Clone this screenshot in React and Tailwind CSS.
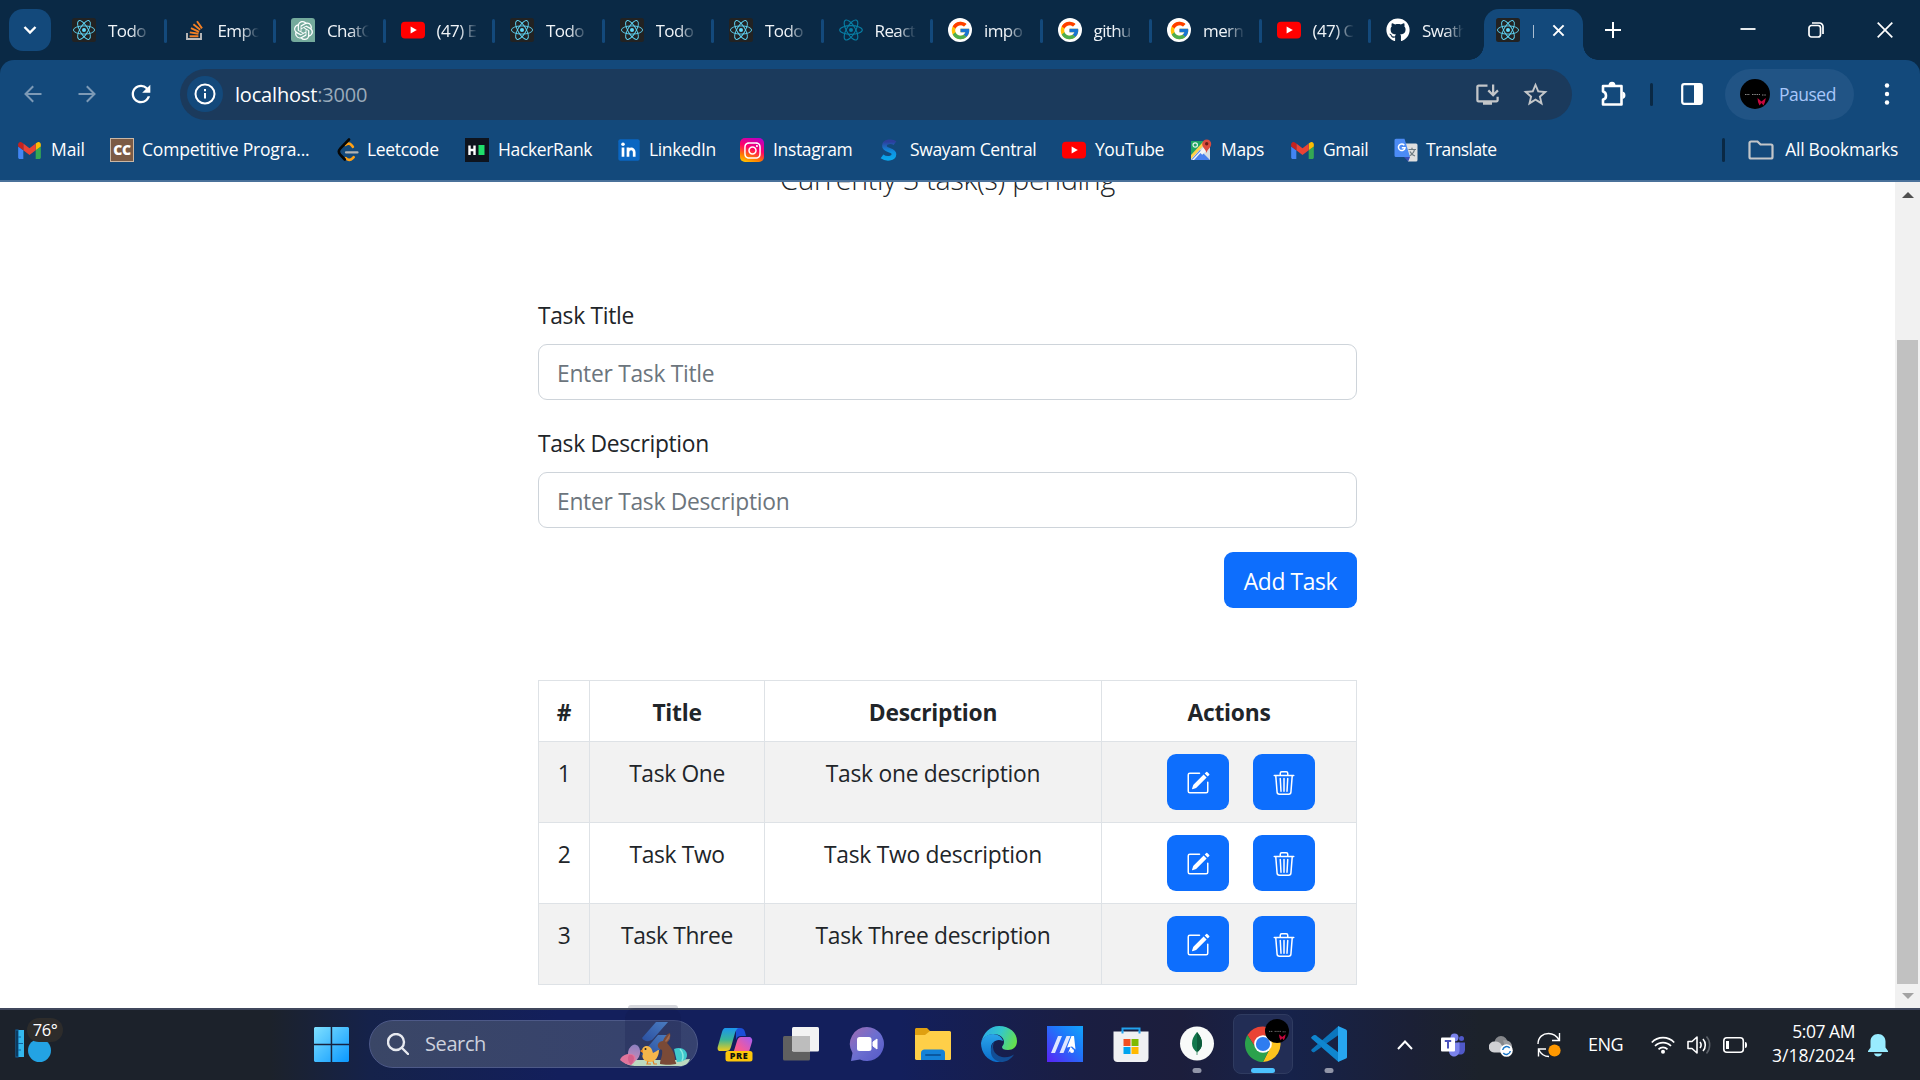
import React from "react";
import { FcGoogle } from "react-icons/fc";
import { SiOpenai } from "react-icons/si";
import { FaGithub, FaInstagram } from "react-icons/fa";
import { BsPencilSquare, BsTrash3 } from "react-icons/bs";
import { MdInstallDesktop, MdStarBorder, MdRefresh } from "react-icons/md";

/* ---------- site icons ---------- */

function ReactLogo({ dark = true, color = "#61dafb" }) {
  return (
    <svg viewBox="0 0 24 24" className="size-6 shrink-0">
      {dark && <rect width="24" height="24" rx="2.5" fill="#222" />}
      <g fill="none" stroke={color} strokeWidth={dark ? 0.9 : 1.1}>
        <ellipse cx="12" cy="12" rx={dark ? 10.6 : 11.3} ry={dark ? 4.1 : 4.4} />
        <ellipse cx="12" cy="12" rx={dark ? 10.6 : 11.3} ry={dark ? 4.1 : 4.4} transform="rotate(60 12 12)" />
        <ellipse cx="12" cy="12" rx={dark ? 10.6 : 11.3} ry={dark ? 4.1 : 4.4} transform="rotate(120 12 12)" />
      </g>
      <circle cx="12" cy="12" r="2" fill={color} />
    </svg>
  );
}

function StackOverflow() {
  return (
    <svg viewBox="0 0 24 24" className="size-6 shrink-0" fill="none" strokeWidth="1.9">
      <path d="M5 15v6h14v-6" stroke="#bcbbbb" />
      <path d="M7.6 18.3h8.800M7.8 14.4l8.700 1.400M9 10.2l8 3.700M11.400 6.300l6.800 5.500M15 3.200l5 7.200" stroke="#f48024" />
    </svg>
  );
}

function ChatGpt() {
  return (
    <span className="flex size-6 shrink-0 items-center justify-center rounded-[3px] rounded-br-none bg-[#74aa9c] text-white">
      <SiOpenai size={19} />
    </span>
  );
}

function YouTube() {
  return (
    <svg viewBox="0 0 24 24" className="size-6 shrink-0">
      <rect y="3.7" width="24" height="16.8" rx="4" fill="#f00" />
      <path d="M9.6 8.6v7l6.2-3.5z" fill="#fff" />
    </svg>
  );
}

function Google() {
  return (
    <span className="flex size-6 shrink-0 items-center justify-center rounded-full bg-white">
      <FcGoogle size={21} />
    </span>
  );
}

function Gmail() {
  return (
    <svg viewBox="52 42 88 66" className="h-[17px] w-[23px] shrink-0">
      <path fill="#4285f4" d="M58 108h14V74L52 59v43c0 3.32 2.69 6 6 6" />
      <path fill="#34a853" d="M120 108h14c3.32 0 6-2.69 6-6V59l-20 15" />
      <path fill="#fbbc04" d="M120 48v26l20-15v-8c0-7.42-8.47-11.65-14.4-7.2" />
      <path fill="#ea4335" d="M72 74V48l24 18 24-18v26L96 92" />
      <path fill="#c5221f" d="M52 51v8l20 15V48l-5.6-4.2c-5.94-4.45-14.4-.22-14.4 7.2" />
    </svg>
  );
}

function CodeChef() {
  return (
    <span className="flex size-6 shrink-0 items-center justify-center border border-[#c9b7a5] bg-[#7b5b45] font-['Open_Sans',sans-serif] text-[14px] font-extrabold leading-none tracking-tight text-white">
      CC
    </span>
  );
}

function Leetcode() {
  return (
    <svg viewBox="0 0 24 24" className="size-6 shrink-0" fill="none" strokeLinecap="round" strokeLinejoin="round" strokeWidth="2.6">
      <path d="M9.5 6.8c2-1.8 4.6-1.4 6 .4l1.4 1.6M9.8 20.2c2 2.2 4.8 2.2 6.4.5l1.5-1.6" stroke="#ffa116" />
      <path d="M13 1.5 4.2 10.6c-1.6 1.7-1.6 4.2 0 6l4.6 4.9" stroke="#070706" />
      <path d="M10 14.4h11.5" stroke="#b3b3b3" strokeWidth="2.2" />
    </svg>
  );
}

function HackerRank() {
  return (
    <svg viewBox="0 0 24 24" className="size-6 shrink-0">
      <path d="M0 0h24v24H0z" fill="#0e141e" />
      <path d="M4.5 7.5v9.5M9.5 7.5v9.5M4.5 12h5" stroke="#fff" strokeWidth="2.4" />
      <path d="M13.5 7h6v10h-6z" fill="#1fe06b" />
    </svg>
  );
}

function LinkedIn() {
  return (
    <svg viewBox="0 0 24 24" className="size-6 shrink-0">
      <rect x="1.3" y="1.3" width="21.4" height="21.4" rx="2" fill="#0a66c2" />
      <path d="M6 9.6v9.2M11 9.6v9.2M11 14c0-3.6 6.2-4.6 6.2.2v4.6" stroke="#fff" strokeWidth="2.7" fill="none" />
      <circle cx="6" cy="6.2" r="1.8" fill="#fff" />
    </svg>
  );
}

function Instagram() {
  return (
    <span className="flex size-6 shrink-0 items-center justify-center rounded-[5px] bg-[linear-gradient(200deg,#b900c8_5%,#ff0069_45%,#ff7a00_75%,#ffd600_100%)] text-white">
      <FaInstagram size={19} />
    </span>
  );
}

function Swayam() {
  return (
    <svg viewBox="0 0 24 24" className="size-6 shrink-0" fill="none">
      <defs>
        <linearGradient id="swayam" x1="0" y1="0" x2="0" y2="1">
          <stop offset="0" stopColor="#2c3f9c" />
          <stop offset=".6" stopColor="#0e8fe0" />
          <stop offset="1" stopColor="#0aa5ea" />
        </linearGradient>
      </defs>
      <path d="M17 5.2C14 3 6.600 3 6.400 7.800c-.2 5 9.800 3.600 9.600 8.400-.2 4.600-7.500 5.400-12 2.200" stroke="url(#swayam)" strokeWidth="4.600" />
    </svg>
  );
}

function Maps() {
  return (
    <svg viewBox="0 0 24 24" className="size-6 shrink-0">
      <path d="M2 3h19v19H2z" fill="#d7dce0" />
      <path d="M2 3h14L2 19z" fill="#1fa463" />
      <path d="M2 22 11 12l10 10z" fill="#4a80ee" />
      <path d="m3 22 15-16 3 3L8 22z" fill="#f5f5f5" />
      <path d="m2 17 12-13 2 2L2 21z" fill="#ffd04b" />
      <path d="M5 22 11.500 15 18 22z" fill="#4a80ee" />
      <circle cx="6.200" cy="7" r="2.200" fill="none" stroke="#e5f4ec" strokeWidth="1.200" />
      <path d="M17.500 15c-.5-4-4.300-5-4.300-9a4.500 4.500 0 0 1 9 0c0 4-4 5-4.700 9z" fill="#dc4b3e" />
      <circle cx="17.700" cy="5.800" r="1.700" fill="#6c1d17" />
    </svg>
  );
}

function Translate() {
  return (
    <svg viewBox="0 0 24 24" className="size-6 shrink-0">
      <path d="M11 5.500h11a1.500 1.500 0 0 1 1.500 1.500v15a1.500 1.500 0 0 1-1.500 1.500H14z" fill="#dfdfdf" />
      <path d="m10 19 6 0-1.800 4.500z" fill="#3a4db5" />
      <path d="M2 .8h8.500L16 19H2a1.500 1.500 0 0 1-1.500-1.500v-15A1.500 1.500 0 0 1 2 .8z" fill="#4c8bf5" />
      <path d="M10.300 7.200A3.300 3.300 0 1 0 11 9.800H7.800" fill="none" stroke="#fff" strokeWidth="1.500" />
      <path d="M14.500 11.500h7.500M18 9.800v1.700M20.500 11.500c-.6 3-2.500 5-4.800 6.300M16 13.500c.8 1.800 2.600 3.600 5 4.500" fill="none" stroke="#6d7a80" strokeWidth="1.200" />
    </svg>
  );
}

/* ---------- browser chrome ---------- */

const tabs = [
  { icon: <ReactLogo />, text: "Todo" },
  { icon: <StackOverflow />, text: "Empo" },
  { icon: <ChatGpt />, text: "ChatG" },
  { icon: <YouTube />, text: "(47) E" },
  { icon: <ReactLogo />, text: "Todo" },
  { icon: <ReactLogo />, text: "Todo" },
  { icon: <ReactLogo />, text: "Todo" },
  { icon: <ReactLogo dark={false} color="#087ea4" />, text: "React" },
  { icon: <Google />, text: "impo" },
  { icon: <Google />, text: "githu" },
  { icon: <Google />, text: "mern" },
  { icon: <YouTube />, text: "(47) C" },
  { icon: <FaGithub size={24} className="shrink-0 text-white" />, text: "Swath" },
];

function TabStrip() {
  return (
    <div className="flex h-[60px] bg-[#0a2945]">
      <div className="ml-[9px] mt-[9px] flex h-[42px] w-[42px] items-center justify-center rounded-[14px] bg-[#13497b]">
        <svg viewBox="0 0 14 10" className="h-[10px] w-[14px]" fill="none" stroke="#fff" strokeWidth="2.4">
          <path d="m1.500 2 5.500 5.500L12.500 2" />
        </svg>
      </div>
      <div className="ml-[6px] flex">
        {tabs.map((tab, i) => (
          <div key={i} className="flex w-[109.5px] pl-[15px] pt-[18px]">
            {tab.icon}
            <span className="ml-3 mt-[1px] w-[42px] overflow-hidden whitespace-nowrap text-[17px] leading-6 tracking-[-0.6px] text-[#f0f4f8] [mask-image:linear-gradient(to_right,#000_55%,transparent_100%)]">
              {tab.text}
            </span>
            {i < 12 && <span className="ml-[14px] mt-[1px] h-6 w-[3px] shrink-0 rounded-full bg-[#13497b]" />}
          </div>
        ))}
      </div>
      <div className="-ml-[12px] flex items-end">
        <span className="size-[15px] bg-[radial-gradient(circle_at_0_0,transparent_14.5px,#13497b_15px)]" />
        <div className="flex h-[51px] w-[99px] rounded-t-[15px] bg-[#13497b] pl-[12px] pt-[9px]">
          <ReactLogo />
          <span className="ml-[13px] mt-[7px] h-[13px] w-[1.5px] bg-[#a9bdd1]" />
          <svg viewBox="0 0 14 14" className="ml-[18px] mt-[6px] size-[13px]" stroke="#fff" strokeWidth="2.2">
            <path d="m1.500 1.500 11 11M12.500 1.500l-11 11" />
          </svg>
        </div>
        <span className="size-[15px] bg-[radial-gradient(circle_at_100%_0,transparent_14.5px,#13497b_15px)]" />
      </div>
      <svg viewBox="0 0 16 16" className="ml-[7px] mt-[22px] size-4" stroke="#fff" strokeWidth="2">
        <path d="M8 0v16M0 8h16" />
      </svg>
      <div className="ml-auto mr-[27px] mt-[22px] flex">
        <svg viewBox="0 0 16 16" className="mr-[52px] size-4" stroke="#fff" strokeWidth="1.800">
          <path d="M.5 7h15" />
        </svg>
        <svg viewBox="0 0 16 16" className="mr-[53px] size-4" fill="none" stroke="#fff" strokeWidth="1.700">
          <rect x="1" y="3.500" width="11.500" height="11.500" rx="2.500" />
          <path d="M4 1h7.500A3.500 3.500 0 0 1 15 4.500V12" />
        </svg>
        <svg viewBox="0 0 16 16" className="size-4" stroke="#fff" strokeWidth="1.700">
          <path d="m.7.7 14.600 14.600M15.300.7.7 15.300" />
        </svg>
      </div>
    </div>
  );
}

function Arrow({ flip }) {
  return (
    <svg viewBox="0 0 18 18" className={flip ? "size-[18px] rotate-180" : "size-[18px]"} fill="none" stroke="#7d9ab6" strokeWidth="2">
      <path d="M17.500 9H1.800M9.200 1.300 1.500 9l7.700 7.700" />
    </svg>
  );
}

function ProfilePicture({ className }) {
  return (
    <svg viewBox="0 0 30 30" className={className}>
      <circle cx="15" cy="15" r="15" fill="#000" />
      <path d="M5 15.500h5M12 15.500h8M22 16h4" stroke="#888" strokeWidth="1" strokeDasharray="1.500 .8" />
      <path d="m21.500 22.500-4-3.500.5 4 1.500 3.500 2-2.500 2 2.500L25 23l.8-4z" fill="#c4083f" />
    </svg>
  );
}

function Toolbar() {
  return (
    <div className="bg-[#0a2945]">
      <div className="flex h-[68px] items-center rounded-t-[14px] bg-[#13497b] pl-[24px] pr-[28px]">
        <Arrow />
        <span className="ml-[36px] flex"><Arrow flip /></span>
        <MdRefresh size={28} className="ml-[31px] text-white" />
        <div className="ml-[25px] flex h-[51px] w-[1392px] items-center rounded-full bg-[#1b3a5c] pl-[7px] pr-[22px]">
          <span className="flex size-9 items-center justify-center rounded-full bg-[#13497b]">
            <svg viewBox="0 0 22 22" className="size-[22px]" fill="none" stroke="#fff" strokeWidth="2">
              <circle cx="11" cy="11" r="9.500" />
              <path d="M11 10v5.500M11 6v2.200" />
            </svg>
          </span>
          <span className="ml-[12px] translate-y-px text-[20px] leading-none tracking-[-0.18px] text-white">
            localhost<span className="text-[#9aaaba]">:3000</span>
          </span>
          <MdInstallDesktop size={27} className="ml-auto text-[#c3c6c9]" />
          <MdStarBorder size={29} className="ml-[20px] text-[#c3c6c9]" />
        </div>
        <svg viewBox="0 0 26 26" className="ml-[28px] size-[26px]">
          <path d="M3 5h18.500v18.500H3v-5c4-.6 4-7 0-8z" fill="none" stroke="#fff" strokeWidth="2.600" strokeLinejoin="round" />
          <path d="M8.500 4.500a3.500 3.800 0 0 1 7 0zM22.500 10.500a3.500 3.800 0 0 1 0 7.500z" fill="#fff" />
        </svg>
        <span className="ml-[24px] h-[23px] w-[3px] rounded-full bg-[#0a2945]" />
        <svg viewBox="0 0 22 22" className="ml-[28px] size-[22px]">
          <rect x="1.200" y="1.200" width="19.600" height="19.600" rx="2" fill="none" stroke="#fff" strokeWidth="2.200" />
          <path d="M13 1h8v20h-8z" fill="#fff" />
        </svg>
        <div className="ml-[22px] flex h-[51px] w-[129px] items-center rounded-full bg-[#215485] pl-[15px]">
          <ProfilePicture className="size-[30px]" />
          <span className="ml-[9px] text-[17.5px] tracking-[-0.5px] text-[#a8c7fa]">Paused</span>
        </div>
        <svg viewBox="0 0 6 22" className="ml-auto h-[22px] w-[6px] translate-x-[-2px]" fill="#fff">
          <circle cx="3" cy="2.500" r="2.200" />
          <circle cx="3" cy="11" r="2.200" />
          <circle cx="3" cy="19.500" r="2.200" />
        </svg>
      </div>
    </div>
  );
}

const bookmarks = [
  { icon: <Gmail />, text: "Mail", w: "w-[92px]", gap: "ml-[10px] tracking-[-0.1px]" },
  { icon: <CodeChef />, text: "Competitive Progra...", w: "w-[226px]", gap: "ml-[8px] tracking-[-0.17px]" },
  { icon: <Leetcode />, text: "Leetcode", w: "w-[129px]", gap: "ml-[7px]" },
  { icon: <HackerRank />, text: "HackerRank", w: "w-[152px]", gap: "ml-[9px]" },
  { icon: <LinkedIn />, text: "LinkedIn", w: "w-[123px]", gap: "ml-[8px]" },
  { icon: <Instagram />, text: "Instagram", w: "w-[138px]", gap: "ml-[9px]" },
  { icon: <Swayam />, text: "Swayam Central", w: "w-[184px]", gap: "ml-[8px]" },
  { icon: <YouTube />, text: "YouTube", w: "w-[127px]", gap: "ml-[9px] tracking-[-0.45px]" },
  { icon: <Maps />, text: "Maps", w: "w-[102px]", gap: "ml-[8px]" },
  { icon: <Gmail />, text: "Gmail", w: "w-[103px]", gap: "ml-[9px] tracking-[-0.45px]" },
  { icon: <Translate />, text: "Translate", w: "w-[110px]", gap: "ml-[8px] tracking-[-0.6px]" },
];

function BookmarksBar() {
  return (
    <div className="flex h-[54px] items-center border-b-2 border-[#4a719a] bg-[#13497b] pb-[8px] pl-[18px] pr-[22px] text-[17.5px] tracking-[-0.35px] text-white">
      {bookmarks.map((b, i) => (
        <div key={i} className={`flex items-center whitespace-nowrap ${b.w}`}>
          {b.icon}
          <span className={`-translate-y-px ${b.gap}`}>{b.text}</span>
        </div>
      ))}
      <span className="ml-auto h-6 w-[3px] rounded-full bg-[#0a2945]" />
      <svg viewBox="0 0 26 20" className="ml-[23px] h-5 w-[26px]" fill="none" stroke="#c3c6c9" strokeWidth="2.200">
        <path d="M1.500 3A1.500 1.500 0 0 1 3 1.500h6.500l3 3H23A1.500 1.500 0 0 1 24.500 6v11a1.500 1.500 0 0 1-1.500 1.500H3A1.500 1.500 0 0 1 1.500 17z" />
      </svg>
      <span className="ml-[11px] -translate-y-px whitespace-nowrap tracking-[-0.3px]">All Bookmarks</span>
    </div>
  );
}

/* ---------- todo page ---------- */

const tasks = [
  { title: "Task One", description: "Task one description" },
  { title: "Task Two", description: "Task Two description" },
  { title: "Task Three", description: "Task Three description" },
];

function Field({ label, placeholder }) {
  return (
    <div className="mb-6">
      <label className="mb-3 block h-9 whitespace-nowrap pt-[2px] leading-9 tracking-[-0.3px]">{label}</label>
      <input
        placeholder={placeholder}
        className="block h-14 w-full rounded-[9px] border border-[#ced4da] px-[18px] pt-[2px] tracking-[-0.28px] placeholder:text-[#6c757d] placeholder:opacity-100"
      />
    </div>
  );
}

function ActionButton({ children }) {
  return (
    <button className="flex h-14 w-[62px] items-center justify-center rounded-[9px] bg-[#0d6efd] pt-[2px] text-white">{children}</button>
  );
}

function TodoPage() {
  return (
    <div className="flex h-[826px] overflow-hidden bg-white">
      <main className="min-w-0 flex-1 text-[22.8px] tracking-[-0.35px] text-[#212529]">
        <p className="-mt-[25px] h-[44px] text-center text-[28.5px] font-light leading-[44px] tracking-[-0.25px]">Currently 3 task(s) pending</p>
        <div className="mx-auto w-[819px] pt-[95px]">
          <Field label="Task Title" placeholder="Enter Task Title" />
          <Field label="Task Description" placeholder="Enter Task Description" />
          <div className="flex justify-end">
            <button className="h-14 w-[133px] whitespace-nowrap rounded-[9px] bg-[#0d6efd] pt-[4px] text-white">Add Task</button>
          </div>
          <table className="mt-[72px] w-[819px] table-fixed border-collapse text-center">
            <colgroup>
              <col className="w-[51px]" />
              <col className="w-[175px]" />
              <col className="w-[337px]" />
              <col className="w-[255px]" />
            </colgroup>
            <thead>
              <tr className="h-[61px]">
                {["#", "Title", "Description", "Actions"].map((h) => (
                  <th key={h} className="border border-[#dee2e6] pt-[5px] font-bold tracking-[-0.25px]">{h}</th>
                ))}
              </tr>
            </thead>
            <tbody>
              {tasks.map((t, i) => (
                <tr key={t.title} className="h-[81px] align-top odd:bg-[#f2f2f2]">
                  <td className="border border-[#dee2e6] pt-[14px] leading-9">{i + 1}</td>
                  <td className="border border-[#dee2e6] pt-[14px] leading-9">{t.title}</td>
                  <td className="border border-[#dee2e6] pt-[14px] leading-9 tracking-[-0.25px]">{t.description}</td>
                  <td className="border border-[#dee2e6]">
                    <div className="mt-3 flex gap-6 pl-[65px]">
                      <ActionButton><BsPencilSquare size={24} /></ActionButton>
                      <ActionButton><BsTrash3 size={24} /></ActionButton>
                    </div>
                  </td>
                </tr>
              ))}
            </tbody>
          </table>
        </div>
      </main>
      <div className="flex w-[25px] flex-col items-center bg-[#f1f1f1]">
        <svg viewBox="0 0 12 6" className="mt-[10px] h-[6px] w-[12px]"><path d="m6 0 6 6H0z" fill="#505050" /></svg>
        <div className="mt-[142px] h-[644px] w-[21px] bg-[#c1c1c1]" />
        <svg viewBox="0 0 12 6" className="mt-[9px] h-[6px] w-[12px]"><path d="m6 6 6-6H0z" fill="#a3a3a3" /></svg>
      </div>
    </div>
  );
}

/* ---------- taskbar ---------- */

function Weather() {
  return (
    <div className="relative ml-[15px] mt-[18px] h-8 w-[48px]">
      <svg viewBox="0 0 38 34" className="h-[34px] w-[38px]">
        <path d="M1 2h8v27H1z" fill="#33b8ee" />
        <path d="M1 2h2v27H1zM3 9h3M3 15.500h5M3 22h3" stroke="#13639f" strokeWidth="1.200" />
        <circle cx="24.500" cy="22.500" r="11.500" fill="#23a3e4" />
      </svg>
      <span className="absolute left-[12px] -top-[10px] flex h-6 w-9 items-center justify-center rounded-full bg-[#2d2c2b] text-[16.5px] tracking-tight text-white">76°</span>
    </div>
  );
}

function WindowsLogo() {
  return (
    <svg viewBox="0 0 35 35" className="size-[35px]">
      <defs>
        <linearGradient id="win" x1="0" y1="0" x2="1" y2="1">
          <stop offset="0" stopColor="#7fe0ff" />
          <stop offset="1" stopColor="#0a98ff" />
        </linearGradient>
      </defs>
      <path d="M1 0h15.700v16.700H0V1zM18.200 0H34l1 1v15.700H18.200zM0 18.200h16.700V35H1l-1-1zM18.200 18.200H35V34l-1 1H18.200z" fill="url(#win)" />
    </svg>
  );
}

function EasterArt() {
  return (
    <svg viewBox="0 0 74 62" className="h-[62px] w-[74px]">
      <defs>
        <linearGradient id="egg" x1="0" y1="0" x2="0" y2="1">
          <stop offset="0" stopColor="#8b7fc0" />
          <stop offset="1" stopColor="#c98bb8" />
        </linearGradient>
        <linearGradient id="ribbon" x1="0" y1="1" x2="1" y2="0">
          <stop offset="0" stopColor="#2a4fa0" />
          <stop offset="1" stopColor="#4a7cc0" />
        </linearGradient>
      </defs>
      <rect x="6" y="0" width="56" height="62" rx="10" fill="#11184a" opacity=".22" />
      <path d="M37 14h12L34 31c-3 3-9 3-11-1z" fill="url(#ribbon)" />
      <path d="M39 27h9c3 0 4 3 2 5L36 47H22z" fill="url(#ribbon)" />
      <path d="M4 53c6-2 10-2 14-1h38l15-1c-2 5-5 7-10 7H18c-6 0-11-1-14-5z" fill="#bcd9bf" />
      <ellipse cx="15" cy="45" rx="6" ry="8.500" fill="url(#egg)" transform="rotate(12 15 45)" />
      <path d="M1 52c2-6 10-7 14-5 3 3 1 8-3 10-3 0-8-2-11-5z" fill="#e0759c" />
      <path d="M10 47c5-1 7 4 2 10-3-3-4-7-2-10z" fill="#c95080" opacity=".6" />
      <path d="M55 41c7-3 13 1 13 6 0 4-3 7-10 7z" fill="#3fc9cd" />
      <path d="M61 41c3 3 4 8 2 12" stroke="#8beae0" strokeWidth="1.500" fill="none" />
      <path d="M23 43c0-6 8-7 10-1l1 3c3-1 4-3 6-3 0 7-4 12-9 12-6 0-9-5-7-8z" fill="#f4b64b" />
      <path d="m21 43 3-2v4z" fill="#f08a1d" />
      <circle cx="26.500" cy="41" r="1" fill="#2b2118" />
      <path d="m29 53-1 3h4M34 53l1 3h3" stroke="#e07e22" strokeWidth="1.200" fill="none" />
      <path d="M41 56c0-5 3-8 2-14-3-1-5-3-4-6 1-2 3-3 5-3 1-4 4-7 7-8 1 3 0 7-3 10 5 5 8 11 8 17 0 2 2 3 1 4-4 1-12 1-16 0z" fill="#7a4a37" />
      <path d="M46 33c2-3 3-5 5-7 0 3-1 6-4 8z" fill="#a2694d" />
    </svg>
  );
}

function Copilot() {
  return (
    <svg viewBox="0 0 36 36" className="size-9">
      <defs>
        <linearGradient id="cpa" x1="0" y1="0" x2="0" y2="1">
          <stop offset="0" stopColor="#1b95ee" />
          <stop offset=".5" stopColor="#38b59a" />
          <stop offset="1" stopColor="#f3cc19" />
        </linearGradient>
        <linearGradient id="cpb" x1="0" y1="1" x2="1" y2="0">
          <stop offset="0" stopColor="#ff7a50" />
          <stop offset=".5" stopColor="#f45a9a" />
          <stop offset="1" stopColor="#a45cf5" />
        </linearGradient>
      </defs>
      <path d="M19 2h4c3 0 4 1 5 4l1 4h-5c-3 0-4 1-5 4z" fill="#1c4fd8" />
      <path d="M8 2h14c-2 0-3 2-4 5l-4 14c-1 3-2 4-5 4H3c-2 0-3-2-2-5L5 6c1-3 2-4 3-4z" fill="url(#cpa)" />
      <path d="M24 11h8c2 0 4 2 3 5l-4 13c-1 3-2 4-5 4H11c3 0 4-2 5-5l4-13c1-3 2-4 4-4z" fill="url(#cpb)" />
      <rect x="8.500" y="25" width="27" height="10.500" rx="2.500" fill="#fdc60b" />
      <text x="22" y="33.400" textAnchor="middle" fontFamily="Open Sans, sans-serif" fontWeight="800" fontSize="9" letterSpacing=".6" fill="#111">PRE</text>
    </svg>
  );
}

function TaskView() {
  return (
    <svg viewBox="0 0 36 36" className="size-9">
      <rect y="10" width="27" height="24.500" rx="1.500" fill="#606060" />
      <rect x="9" y="1" width="27" height="24.500" rx="1.500" fill="#f3f3f3" />
      <path d="M9 10h18v15.500H10.500L9 24z" fill="#bdbdbd" />
    </svg>
  );
}

function Chat() {
  return (
    <svg viewBox="0 0 36 36" className="size-9">
      <defs>
        <linearGradient id="chat" x1="0" y1="0" x2="1" y2="1">
          <stop offset="0" stopColor="#a06ab0" />
          <stop offset=".5" stopColor="#6c6fd0" />
          <stop offset="1" stopColor="#5458c8" />
        </linearGradient>
      </defs>
      <path d="M18 1a17 17 0 1 1-7 32.500L2 35l1.500-8A17 17 0 0 1 18 1z" fill="url(#chat)" />
      <rect x="8" y="11" width="14.500" height="14" rx="2.500" fill="#fff" />
      <path d="m24 16 4-3v10l-4-3z" fill="#fff" stroke="#fff" strokeLinejoin="round" />
    </svg>
  );
}

function Explorer() {
  return (
    <svg viewBox="0 0 36 36" className="size-9">
      <path d="M0 3.500C0 2.500.8 2 1.500 2H12l4 4-5 5H0z" fill="#e0a010" />
      <path d="M0 9h10l5-4h19.500C35.500 5 36 6 36 6.500v26c0 1-.8 1.500-1.500 1.500h-33C.5 34 0 33 0 32.500z" fill="#ffcf48" />
      <path d="M6 34V27c0-2 1.500-3.500 3.500-3.500h17c2 0 3.500 1.500 3.500 3.500v7z" fill="#1482d8" />
      <path d="M11 29h14" stroke="#0a58a0" strokeWidth="2" strokeLinecap="round" />
    </svg>
  );
}

function Edge() {
  return (
    <svg viewBox="0 0 36 36" className="size-9">
      <defs>
        <linearGradient id="edgeTop" x1="0" y1=".3" x2="1" y2=".6">
          <stop offset="0" stopColor="#2aa9e8" />
          <stop offset=".5" stopColor="#35c8c8" />
          <stop offset="1" stopColor="#66e04a" />
        </linearGradient>
        <linearGradient id="edgeLow" x1="0" y1="0" x2="0" y2="1">
          <stop offset="0" stopColor="#2aa5ea" />
          <stop offset="1" stopColor="#0a6ccb" />
        </linearGradient>
      </defs>
      <path d="M0 17C2 7 9 0 18 0c11 0 18 7 18 15 0 6-4 9-9 9-4 0-6-1-6-3 0-1 2-2 2-5 0-4-4-8-10-8C7 8 1 12 0 17z" fill="url(#edgeTop)" />
      <path d="M0 17c1-5 6-9 12-9 5 0 9 3 10 7-7-3-13 2-12 9 1 6 5 11 11 12-1 .3-2 .3-3 .3C8 36 0 28 0 17z" fill="url(#edgeLow)" />
      <path d="M14 15c-4 5-2 14 7 16 5 1 9-.5 12-2.500-3 5-8 7.500-13 7.500C13 35 9 30 10 23c.5-4 2-7 4-8z" fill="#124e96" />
    </svg>
  );
}

function Asus() {
  return (
    <svg viewBox="0 0 36 36" className="size-9">
      <defs>
        <linearGradient id="asus" x1="0" y1="1" x2="1" y2="0">
          <stop offset="0" stopColor="#5a22f5" />
          <stop offset=".6" stopColor="#1e78fa" />
          <stop offset="1" stopColor="#12a4fb" />
        </linearGradient>
      </defs>
      <path d="M0 0h36v36H0z" fill="url(#asus)" />
      <path d="m4 27 7-17h4L8 27zM12.500 27l7-17h4l-7 17z" fill="#dfe6ff" />
      <path d="M20 21.500 24.500 10H27l1.500 13.500-3.500-3zM21 27l2.500-6 2 1.500z" fill="#fff" />
      <circle cx="25" cy="25" r="2" fill="#fff" />
    </svg>
  );
}

function Store() {
  return (
    <svg viewBox="0 0 36 36" className="size-9">
      <path d="M9.500 8V2.500h17V8" fill="none" stroke="#22a2ee" strokeWidth="2" />
      <path d="M.5 5.500h35V32c0 2.500-1.500 4-4 4h-27c-2.500 0-4-1.500-4-4z" fill="#f0f1f3" />
      <path d="M9.500 5v2.500M26.500 5v2.500" stroke="#22a2ee" strokeWidth="2" />
      <path d="M10.500 13h7v7h-7z" fill="#f25022" />
      <path d="M18.500 13h7v7h-7z" fill="#7fba00" />
      <path d="M10.500 21h7v7h-7z" fill="#00a4ef" />
      <path d="M18.500 21h7v7h-7z" fill="#ffb900" />
    </svg>
  );
}

function Mongo() {
  return (
    <svg viewBox="0 0 36 36" className="size-9">
      <circle cx="18" cy="17.500" r="17" fill="#f8faf9" />
      <path d="M18 6c3.500 4 5 7.500 5 11.500s-2 6.500-5 9c-3-2.500-5-5-5-9S14.500 10 18 6z" fill="#11774c" />
      <path d="M18 6c3.500 4 5 7.500 5 11.500s-2 6.500-5 9z" fill="#0b5a3a" />
      <path d="M18 25v4" stroke="#5a9c7c" strokeWidth="1" />
    </svg>
  );
}

function ChromeLogo() {
  return (
    <svg viewBox="2 2 44 44" className="size-9">
      <path d="M4.950 13A22 22 0 0 1 43.050 14H24L15.340 29Z" fill="#e94335" />
      <path d="M43.050 14A22 22 0 0 1 24 46L32.700 29 24 14Z" fill="#fcc31e" />
      <path d="M24 46A22 22 0 0 1 4.950 13L15.340 29 24 34l8.700-5z" fill="#2ba24c" />
      <circle cx="24" cy="24" r="10.800" fill="#fff" />
      <circle cx="24" cy="24" r="8.700" fill="#2e7cf0" />
    </svg>
  );
}

function VsCode() {
  return (
    <svg viewBox="0 0 36 36" className="size-9">
      <path d="M2.800 9.500 27.500 27V36L.8 12.800c-.8-.8-.8-1.400 0-2z" fill="#0f86cf" />
      <path d="M2.800 26.500 27.500 9V0L.8 23.200c-.8.800-.8 1.400 0 2z" fill="#0b76bd" />
      <path d="M1 10.700 3 9.200c.6-.4 1.200-.4 1.800 0L27.500 26.500V35L1 12.500c-.5-.6-.5-1.300 0-1.800z" fill="#0f86cf" />
      <path d="M27 0l8 3.600c.6.300 1 .9 1 1.500v25.800c0 .7-.4 1.300-1 1.500L27 36z" fill="#27a6f0" />
    </svg>
  );
}

function TaskbarApp({ children, indicator }) {
  return (
    <div className="relative flex h-full w-[66px] justify-center pt-[16px]">
      {children}
      {indicator && <span className="absolute bottom-[7px] left-1/2 h-[5px] w-[9px] -translate-x-1/2 rounded-full bg-[#9195a8]" />}
    </div>
  );
}

function Tray() {
  return (
    <div className="ml-auto flex h-full w-[523px] items-center text-white">
      <svg viewBox="0 0 16 10" className="h-[10px] w-4" fill="none" stroke="#fff" strokeWidth="2">
        <path d="m1 9 7-7.500L15 9" />
      </svg>
      <svg viewBox="0 0 24 24" className="ml-7 size-6">
        <circle cx="13.500" cy="4.500" r="4" fill="#7b83eb" />
        <circle cx="20.500" cy="5.500" r="2.500" fill="#5059c9" />
        <path d="M17 9.500h7v7c0 3-2 5-4.500 5H17z" fill="#5059c9" />
        <path d="M9 9.500h9.500V17c0 4-2.500 6.500-5.500 6.500S8 21 8 18z" fill="#7b83eb" />
        <rect y="4.500" width="14" height="14" rx="1" fill="#fff" />
        <path d="M3.800 8h6.400M7 8v7.500" stroke="#4b53bc" strokeWidth="2" />
      </svg>
      <svg viewBox="0 0 24 24" className="ml-6 size-6">
        <circle cx="12" cy="9.500" r="6.500" fill="#85878b" />
        <path d="M14 7.500c5-1 9 2 9 6s-2 6-5 6z" fill="#9c9da1" />
        <path d="M5 19.500a5.500 5.500 0 0 1 .5-11c3-.5 6 1 7 3.500l5 7.500z" fill="#d0d1d4" />
        <circle cx="17.500" cy="17.500" r="6.300" fill="#fff" />
        <path d="M13.700 17a4 4 0 0 1 7-2M21.300 18a4 4 0 0 1-7 2" fill="none" stroke="#1976c8" strokeWidth="1.500" />
      </svg>
      <svg viewBox="0 0 24 26" className="ml-6 h-[26px] w-6" fill="none" stroke="#fff" strokeWidth="1.400">
        <path d="M1 12C1 5 6 1.500 11.500 1.500c4.500 0 8 2 10.500 6.500M22.500 1v7.500H15M1.500 24.500V17H9M2 18c2 4.500 6 6.500 10 6.500" />
        <circle cx="17.500" cy="18.500" r="6.100" fill="#ff9800" stroke="none" />
      </svg>
      <span className="ml-[27px] w-[35px] -translate-y-px text-[18px] tracking-[-0.5px]">ENG</span>
      <svg viewBox="0 0 24 18" className="ml-7 h-[18px] w-6" fill="none" stroke="#fff" strokeWidth="1.700">
        <path d="M.8 6.500a15.500 15.500 0 0 1 22.400 0M4 10a11 11 0 0 1 16 0M7.500 13.300a6.300 6.300 0 0 1 9 0" />
        <circle cx="12" cy="15.800" r="2" fill="#fff" stroke="none" />
      </svg>
      <svg viewBox="0 0 24 20" className="ml-3 h-5 w-6" fill="none" stroke="#fff" strokeWidth="1.600" strokeLinejoin="round">
        <path d="M1 6.500h4l5-4.500v16l-5-4.500H1zM13 7a5 5 0 0 1 0 6M16 4a9 9 0 0 1 0 12" />
        <path d="M19.500 1.500a13 13 0 0 1 0 17" stroke="#5b6067" />
      </svg>
      <svg viewBox="0 0 24 16" className="ml-3 h-4 w-6" fill="none" stroke="#fff" strokeWidth="1.600">
        <rect x=".8" y=".8" width="19.500" height="14.400" rx="3" />
        <path d="M4.500 4v8" strokeWidth="3" />
        <path d="M22 5v6c1.500 0 2-1 2-3s-.5-3-2-3z" fill="#fff" stroke="none" />
      </svg>
      <div className="ml-auto flex -translate-y-[2px] flex-col items-end text-[17.5px] leading-6">
        <span className="tracking-[-0.45px]">5:07 AM</span>
        <span className="tracking-[0px]">3/18/2024</span>
      </div>
      <svg viewBox="0 0 20 24" className="ml-[13px] mr-[32px] h-6 w-5" fill="#99ecff">
        <path d="M10 1c4.500 0 7.500 3.200 7.500 7.500v6L20 18v1H0v-1l2.500-3.500v-6C2.500 4.200 5.500 1 10 1zM6 20.500h8c-.5 2-2 3-4 3s-3.500-1-4-3z" />
      </svg>
    </div>
  );
}

function Taskbar() {
  return (
    <div className="relative flex h-[72px] border-t-2 border-[#40475c] bg-[linear-gradient(to_right,#1c222b_0px,#1c222b_270px,#15224a_370px,#131f5c_560px,#131f5c_900px,#1a1e42_1080px,#1c1e3c_1180px,#16224a_1290px,#1b2036_1410px,#1c222b_1480px)]">
      <span className="absolute -top-[5px] left-[628px] h-[3px] w-[50px] rounded-t-[6px] bg-[#d6d7dc]" />
      <div className="flex w-[314px]"><Weather /></div>
      <div className="mt-[17px]"><WindowsLogo /></div>
      <div className="ml-5 mt-[10px] flex h-12 w-[329px] items-center rounded-full border border-[#4d5988] bg-[linear-gradient(to_right,#3a4666,#36426f)] pl-[17px]">
        <svg viewBox="0 0 22 22" className="size-[22px]" fill="none" stroke="#e8eaf0" strokeWidth="2.400" strokeLinecap="round">
          <circle cx="9" cy="9" r="8" />
          <path d="m15 15 6 6" />
        </svg>
        <span className="ml-[16px] text-[20px] tracking-[-0.4px] text-[#cdd1dd]">Search</span>
        <span className="ml-auto mr-[4px] -translate-y-[5px]"><EasterArt /></span>
      </div>
      <div className="ml-[4px] flex h-full">
        <TaskbarApp><Copilot /></TaskbarApp>
        <TaskbarApp><TaskView /></TaskbarApp>
        <TaskbarApp><Chat /></TaskbarApp>
        <TaskbarApp><Explorer /></TaskbarApp>
        <TaskbarApp><Edge /></TaskbarApp>
        <TaskbarApp><Asus /></TaskbarApp>
        <TaskbarApp><Store /></TaskbarApp>
        <TaskbarApp indicator><Mongo /></TaskbarApp>
        <div className="flex w-[66px] justify-center pt-1">
          <div className="relative flex h-[60px] w-[60px] justify-center rounded-lg border border-[#2f3b60] bg-[#222d55] pt-[11px]">
            <ChromeLogo />
            <ProfilePicture className="absolute right-[3px] top-[4px] size-6" />
            <span className="absolute bottom-0 left-[17px] h-[5px] w-6 rounded-full bg-[#4cc2ff]" />
          </div>
        </div>
        <TaskbarApp indicator><VsCode /></TaskbarApp>
      </div>
      <Tray />
    </div>
  );
}

export default function App() {
  return (
    <div className="h-[1080px] w-[1920px] overflow-hidden font-['Open_Sans','Noto_Sans',sans-serif]">
      <TabStrip />
      <Toolbar />
      <BookmarksBar />
      <TodoPage />
      <Taskbar />
    </div>
  );
}
